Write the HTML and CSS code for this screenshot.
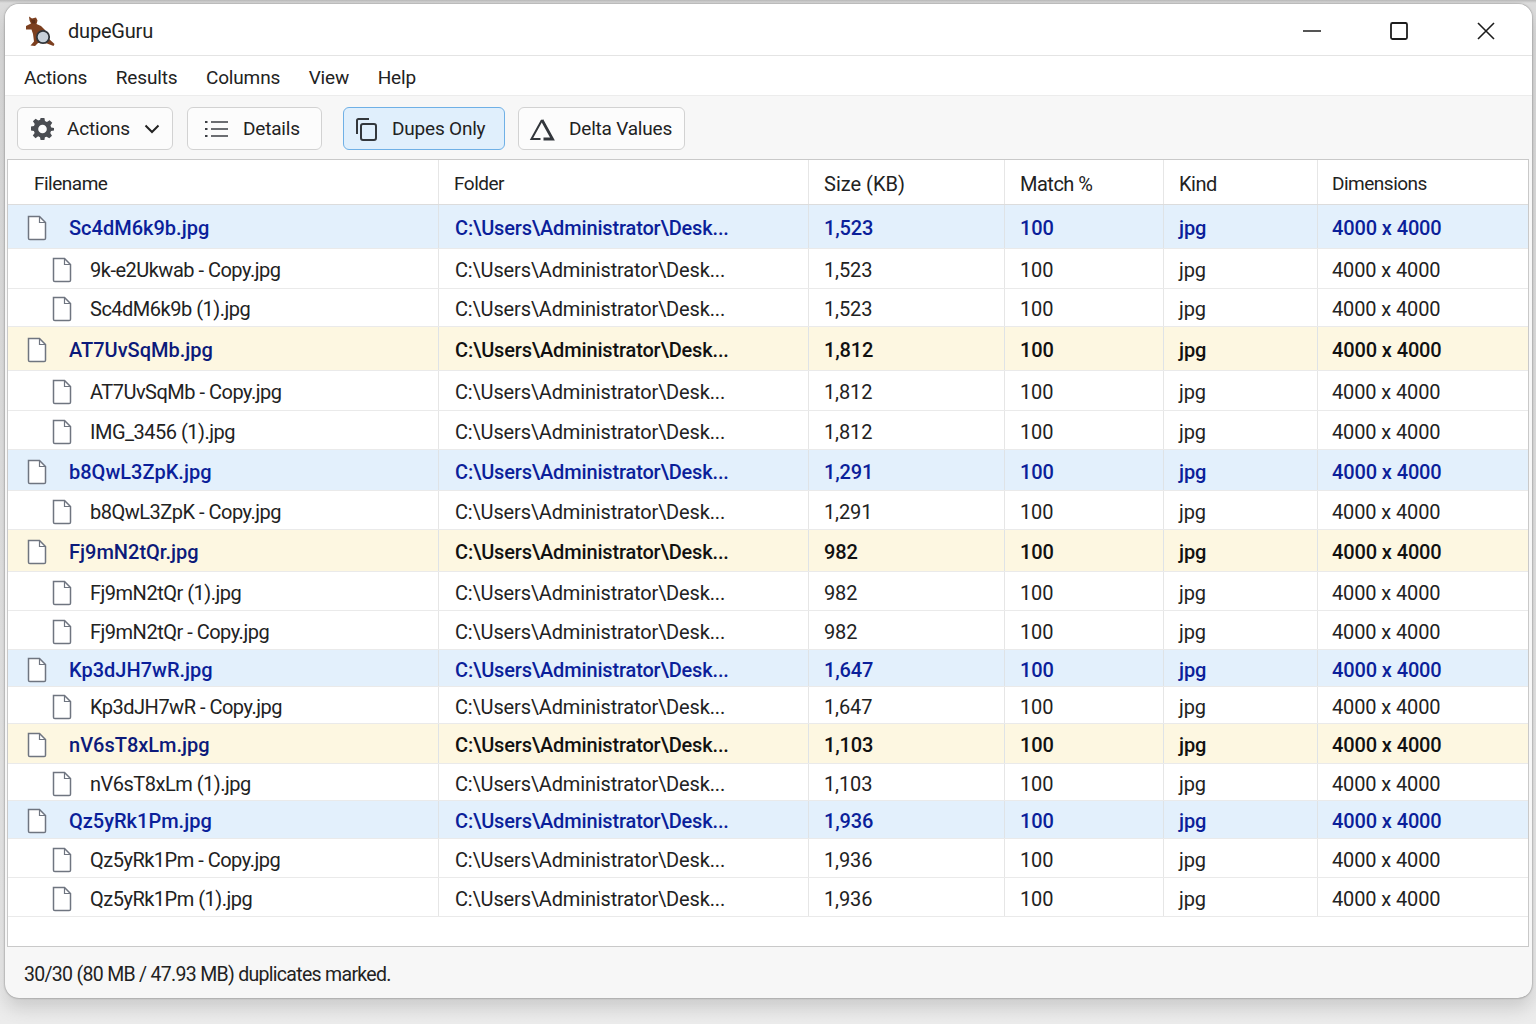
FILE: index.html
```html
<!DOCTYPE html>
<html lang="en">
<head>
    <meta charset="UTF-8">
    <meta name="viewport" content="width=device-width, initial-scale=1.0">
    <title>dupeGuru</title>
    <link rel="stylesheet" href="styles.css">
</head>
<body>
    <svg class="defs" width="0" height="0">
        <symbol id="file" viewBox="0 0 20 26">
            <path d="M1.500 1.500H12.500L18.500 7.500V23.200Q18.500 24.500 17.200 24.500H2.800Q1.500 24.500 1.500 23.200Z" fill="#fff" stroke="#6f7580" stroke-width="1.500"/>
            <path d="M12.500 1.500V7.500H18.500" fill="none" stroke="#6f7580" stroke-width="1.200"/>
        </symbol>
    </svg>
    <div class="window">
        <header class="titlebar">
            <svg class="app-icon" viewBox="0 0 32 32">
                <path d="M4 1.500L7 3.500L11 2.500L12.500 5.500L11.500 9L16 11L20 15L23 23L29.500 29L28.500 31L22 28.500L13 28L10 31L5.500 30.500L9 26.500L8 19L6.500 14.500L1 14.500L1 11L6 8.500L4.500 5.500Z" fill="#7c3f1f"/>
                <path d="M6 4.500L10 5L10.500 8.500L7 8.500Z" fill="#5f2e16"/>
                <circle cx="18" cy="22" r="6.200" fill="#c7d0d9" stroke="#30353a" stroke-width="1.800"/>
            </svg>
            <span class="app-name">dupeGuru</span>
            <div class="win-buttons">
                <svg viewBox="0 0 20 20"><path d="M1 10H19" stroke="#1c1c1c" stroke-width="1.600"/></svg>
                <svg viewBox="0 0 20 20"><rect x="2" y="2" width="16" height="16" rx="1.500" fill="none" stroke="#1c1c1c" stroke-width="1.800"/></svg>
                <svg viewBox="0 0 20 20"><path d="M2 2L18 18M18 2L2 18" stroke="#1c1c1c" stroke-width="1.600"/></svg>
            </div>
        </header>
        <nav class="menubar">
            <span>Actions</span><span>Results</span><span>Columns</span><span>View</span><span>Help</span>
        </nav>
        <div class="toolbar">
            <button class="tool tool-actions">
                <svg class="tool-icon" viewBox="0 0 24 24"><path fill="#4a4d52" fill-rule="evenodd" d="M10 1H14L14.600 4.300L16.600 5.200L19.400 3.300L22.200 6.100L20.300 8.900L21.100 10.900L24 11.500V14L20.900 14.700L20.100 16.700L21.900 19.500L19.100 22.300L16.300 20.500L14.500 21.200L14 24H10L9.400 21L7.400 20.200L4.700 22.200L1.900 19.400L3.800 16.600L3 14.600L0 14V10L3.100 9.300L3.900 7.300L2 4.500L4.800 1.700L7.600 3.600L9.500 2.900ZM12 8A4.500 4.500 0 1 0 12 17A4.500 4.500 0 1 0 12 8Z"/></svg>
                <span>Actions</span>
                <svg class="chevron" viewBox="0 0 16 10"><path d="M1.500 1.500L8 8L14.500 1.500" fill="none" stroke="#222" stroke-width="2"/></svg>
            </button>
            <button class="tool tool-details">
                <svg class="tool-icon" viewBox="0 0 24 20"><path d="M7 3H24M7 10H24M7 17H24" stroke="#3c3f44" stroke-width="1.600"/><path d="M1 3H3.500M1 10H3.500M1 17H3.500" stroke="#3c3f44" stroke-width="2"/></svg>
                <span>Details</span>
            </button>
            <button class="tool tool-dupes">
                <svg class="tool-icon" viewBox="0 0 24 24"><rect x="7" y="7" width="15" height="16" rx="2" fill="none" stroke="#33373c" stroke-width="2"/><path d="M3 17V3.500Q3 2 4.500 2H15" fill="none" stroke="#33373c" stroke-width="2"/></svg>
                <span>Dupes Only</span>
            </button>
            <button class="tool tool-delta">
                <svg class="tool-icon" viewBox="0 0 26 24"><path d="M11.500 22H2.500L13 3" fill="none" stroke="#33373c" stroke-width="2"/><path d="M14.500 22H23.500L13 3" fill="none" stroke="#33373c" stroke-width="2.800"/></svg>
                <span>Delta Values</span>
            </button>
        </div>
        <section class="results">
            <div class="row head">
                <div class="cell first narrow">Filename</div><div class="cell narrow">Folder</div><div class="cell plain">Size (KB)</div><div class="cell">Match %</div><div class="cell">Kind</div><div class="cell narrow">Dimensions</div>
            </div>
            <div class="body">
                <div class="row ref blue"><div class="cell first"><svg class="file"><use href="#file"/></svg><span>Sc4dM6k9b.jpg</span></div><div class="cell">C:\Users\Administrator\Desk...</div><div class="cell">1,523</div><div class="cell">100</div><div class="cell">jpg</div><div class="cell">4000 x 4000</div></div>
                <div class="row"><div class="cell first"><svg class="file"><use href="#file"/></svg><span>9k-e2Ukwab - Copy.jpg</span></div><div class="cell">C:\Users\Administrator\Desk...</div><div class="cell">1,523</div><div class="cell">100</div><div class="cell">jpg</div><div class="cell">4000 x 4000</div></div>
                <div class="row"><div class="cell first"><svg class="file"><use href="#file"/></svg><span>Sc4dM6k9b (1).jpg</span></div><div class="cell">C:\Users\Administrator\Desk...</div><div class="cell">1,523</div><div class="cell">100</div><div class="cell">jpg</div><div class="cell">4000 x 4000</div></div>
                <div class="row ref yellow"><div class="cell first"><svg class="file"><use href="#file"/></svg><span>AT7UvSqMb.jpg</span></div><div class="cell">C:\Users\Administrator\Desk...</div><div class="cell">1,812</div><div class="cell">100</div><div class="cell">jpg</div><div class="cell">4000 x 4000</div></div>
                <div class="row"><div class="cell first"><svg class="file"><use href="#file"/></svg><span>AT7UvSqMb - Copy.jpg</span></div><div class="cell">C:\Users\Administrator\Desk...</div><div class="cell">1,812</div><div class="cell">100</div><div class="cell">jpg</div><div class="cell">4000 x 4000</div></div>
                <div class="row"><div class="cell first"><svg class="file"><use href="#file"/></svg><span>IMG_3456 (1).jpg</span></div><div class="cell">C:\Users\Administrator\Desk...</div><div class="cell">1,812</div><div class="cell">100</div><div class="cell">jpg</div><div class="cell">4000 x 4000</div></div>
                <div class="row ref blue"><div class="cell first"><svg class="file"><use href="#file"/></svg><span>b8QwL3ZpK.jpg</span></div><div class="cell">C:\Users\Administrator\Desk...</div><div class="cell">1,291</div><div class="cell">100</div><div class="cell">jpg</div><div class="cell">4000 x 4000</div></div>
                <div class="row"><div class="cell first"><svg class="file"><use href="#file"/></svg><span>b8QwL3ZpK - Copy.jpg</span></div><div class="cell">C:\Users\Administrator\Desk...</div><div class="cell">1,291</div><div class="cell">100</div><div class="cell">jpg</div><div class="cell">4000 x 4000</div></div>
                <div class="row ref yellow"><div class="cell first"><svg class="file"><use href="#file"/></svg><span>Fj9mN2tQr.jpg</span></div><div class="cell">C:\Users\Administrator\Desk...</div><div class="cell">982</div><div class="cell">100</div><div class="cell">jpg</div><div class="cell">4000 x 4000</div></div>
                <div class="row"><div class="cell first"><svg class="file"><use href="#file"/></svg><span>Fj9mN2tQr (1).jpg</span></div><div class="cell">C:\Users\Administrator\Desk...</div><div class="cell">982</div><div class="cell">100</div><div class="cell">jpg</div><div class="cell">4000 x 4000</div></div>
                <div class="row"><div class="cell first"><svg class="file"><use href="#file"/></svg><span>Fj9mN2tQr - Copy.jpg</span></div><div class="cell">C:\Users\Administrator\Desk...</div><div class="cell">982</div><div class="cell">100</div><div class="cell">jpg</div><div class="cell">4000 x 4000</div></div>
                <div class="row ref blue"><div class="cell first"><svg class="file"><use href="#file"/></svg><span>Kp3dJH7wR.jpg</span></div><div class="cell">C:\Users\Administrator\Desk...</div><div class="cell">1,647</div><div class="cell">100</div><div class="cell">jpg</div><div class="cell">4000 x 4000</div></div>
                <div class="row"><div class="cell first"><svg class="file"><use href="#file"/></svg><span>Kp3dJH7wR - Copy.jpg</span></div><div class="cell">C:\Users\Administrator\Desk...</div><div class="cell">1,647</div><div class="cell">100</div><div class="cell">jpg</div><div class="cell">4000 x 4000</div></div>
                <div class="row ref yellow"><div class="cell first"><svg class="file"><use href="#file"/></svg><span>nV6sT8xLm.jpg</span></div><div class="cell">C:\Users\Administrator\Desk...</div><div class="cell">1,103</div><div class="cell">100</div><div class="cell">jpg</div><div class="cell">4000 x 4000</div></div>
                <div class="row"><div class="cell first"><svg class="file"><use href="#file"/></svg><span>nV6sT8xLm (1).jpg</span></div><div class="cell">C:\Users\Administrator\Desk...</div><div class="cell">1,103</div><div class="cell">100</div><div class="cell">jpg</div><div class="cell">4000 x 4000</div></div>
                <div class="row ref blue"><div class="cell first"><svg class="file"><use href="#file"/></svg><span>Qz5yRk1Pm.jpg</span></div><div class="cell">C:\Users\Administrator\Desk...</div><div class="cell">1,936</div><div class="cell">100</div><div class="cell">jpg</div><div class="cell">4000 x 4000</div></div>
                <div class="row"><div class="cell first"><svg class="file"><use href="#file"/></svg><span>Qz5yRk1Pm - Copy.jpg</span></div><div class="cell">C:\Users\Administrator\Desk...</div><div class="cell">1,936</div><div class="cell">100</div><div class="cell">jpg</div><div class="cell">4000 x 4000</div></div>
                <div class="row"><div class="cell first"><svg class="file"><use href="#file"/></svg><span>Qz5yRk1Pm (1).jpg</span></div><div class="cell">C:\Users\Administrator\Desk...</div><div class="cell">1,936</div><div class="cell">100</div><div class="cell">jpg</div><div class="cell">4000 x 4000</div></div>
            </div>
        </section>
        <footer class="statusbar">30/30 (80 MB / 47.93 MB) duplicates marked.</footer>
    </div>
</body>
</html>
```
FILE: styles.css
```css
* {
    box-sizing: border-box;
}
html, body {
    height: 100%;
}
body {
    margin: 0;
    padding: 4px 4px 26px 5px;
    background: linear-gradient(180deg, #b9b9b9 0, #dcdcdc 3px, #ececec 100%);
    font-family: Roboto, sans-serif;
    font-size: 20px;
    color: #222;
    overflow: hidden;
}
.defs {
    position: absolute;
}
.window {
    height: 994px;
    display: flex;
    flex-direction: column;
    background: #f7f7f7;
    border-radius: 14px;
    box-shadow: 0 0 2px rgba(0,0,0,0.5), 0 10px 18px rgba(0,0,0,0.14);
    overflow: hidden;
}
.titlebar {
    height: 52px;
    flex: none;
    display: flex;
    align-items: center;
    padding: 2px 36px 0 20px;
    background: white;
    border-bottom: 1px solid #e4e4e4;
}
.app-icon {
    width: 32px;
    height: 32px;
}
.app-name {
    margin-left: 11px;
    letter-spacing: -0.2px;
}
.win-buttons {
    margin-left: auto;
    display: flex;
    gap: 67px;
}
.win-buttons svg {
    width: 20px;
    height: 20px;
}
.menubar {
    height: 40px;
    flex: none;
    display: flex;
    align-items: center;
    gap: 28.5px;
    padding: 3px 0 0 19px;
    background: white;
    border-bottom: 1px solid #ececec;
    font-size: 19px;
    letter-spacing: -0.15px;
}
.toolbar {
    height: 63px;
    flex: none;
    display: flex;
    align-items: center;
    padding: 2px 0 0 12px;
}
.tool {
    height: 43px;
    display: flex;
    align-items: center;
    background: #fcfcfc;
    border: 1px solid #d2d2d2;
    border-radius: 6px;
    font: inherit;
    font-size: 19px;
    letter-spacing: -0.2px;
    color: #222;
    padding: 0;
}
.tool-icon {
    flex: none;
}
.tool-actions {
    width: 156px;
    padding-left: 13px;
}
.tool-actions .tool-icon {
    width: 23px;
    height: 23px;
    margin-right: 13px;
}
.chevron {
    width: 16px;
    height: 10px;
    margin-left: 14px;
}
.tool-details {
    width: 135px;
    margin-left: 14px;
    padding-left: 16px;
}
.tool-details .tool-icon {
    width: 24px;
    height: 20px;
    margin-right: 15px;
}
.tool-dupes {
    width: 162px;
    margin-left: 21px;
    padding-left: 10px;
    background: #e0effc;
    border-color: #6fb0e6;
}
.tool-dupes .tool-icon {
    width: 24px;
    height: 24px;
    margin-right: 14px;
}
.tool-delta {
    width: 167px;
    margin-left: 13px;
    padding-left: 10px;
}
.tool-delta .tool-icon {
    width: 26px;
    height: 24px;
    margin-right: 14px;
}
.results {
    flex: 1;
    margin: 0 3px 0 2px;
    background: white;
    border: 1px solid #c9c9c9;
    min-height: 0;
}
.row {
    display: grid;
    grid-template-columns: 431px 370px 196px 159px 154px 1fr;
    border-bottom: 1px solid #eaeaea;
}
.head {
    height: 45px;
    border-bottom-color: #dcdcdc;
}
.body {
    display: grid;
    grid-template-rows: 44px 40px 38px 44px 40px 39px 41px 39px 42px 39px 39px 37px 37px 40px 37px 38px 39px 39px;
}
.cell {
    display: flex;
    align-items: center;
    padding: 3px 0 0 15px;
    border-right: 1px solid #e6e6e6;
    white-space: nowrap;
    overflow: hidden;
    letter-spacing: -0.12px;
}
.cell:nth-child(2) {
    padding-left: 16px;
    letter-spacing: -0.16px;
}
.cell:last-child {
    border-right: none;
    padding-left: 14px;
}
.cell.first {
    padding-left: 44px;
    letter-spacing: -0.5px;
}
.head .cell {
    padding-left: 15px;
    letter-spacing: -0.5px;
}
.head .cell:last-child {
    padding-left: 14px;
}
.head .cell.first {
    padding-left: 26px;
}
.head .plain {
    letter-spacing: 0;
}
.head .narrow {
    font-size: 19px;
}
.ref .cell {
    font-weight: 500;
    border-right-color: #dfe3e6;
}
.ref .cell.first {
    padding-left: 19px;
    letter-spacing: 0;
}
.blue {
    background: #e3f0fc;
    color: #0b1f9a;
}
.yellow {
    background: #fdf7e1;
    color: #111;
}
.yellow .first {
    color: #0c1a7a;
}
.file {
    width: 20px;
    height: 26px;
    flex: none;
    margin-right: 18px;
}
.ref .file {
    margin-right: 22px;
}
.statusbar {
    height: 51px;
    flex: none;
    display: flex;
    align-items: center;
    padding: 3px 0 0 19px;
    font-size: 19.5px;
    letter-spacing: -0.7px;
}
```
